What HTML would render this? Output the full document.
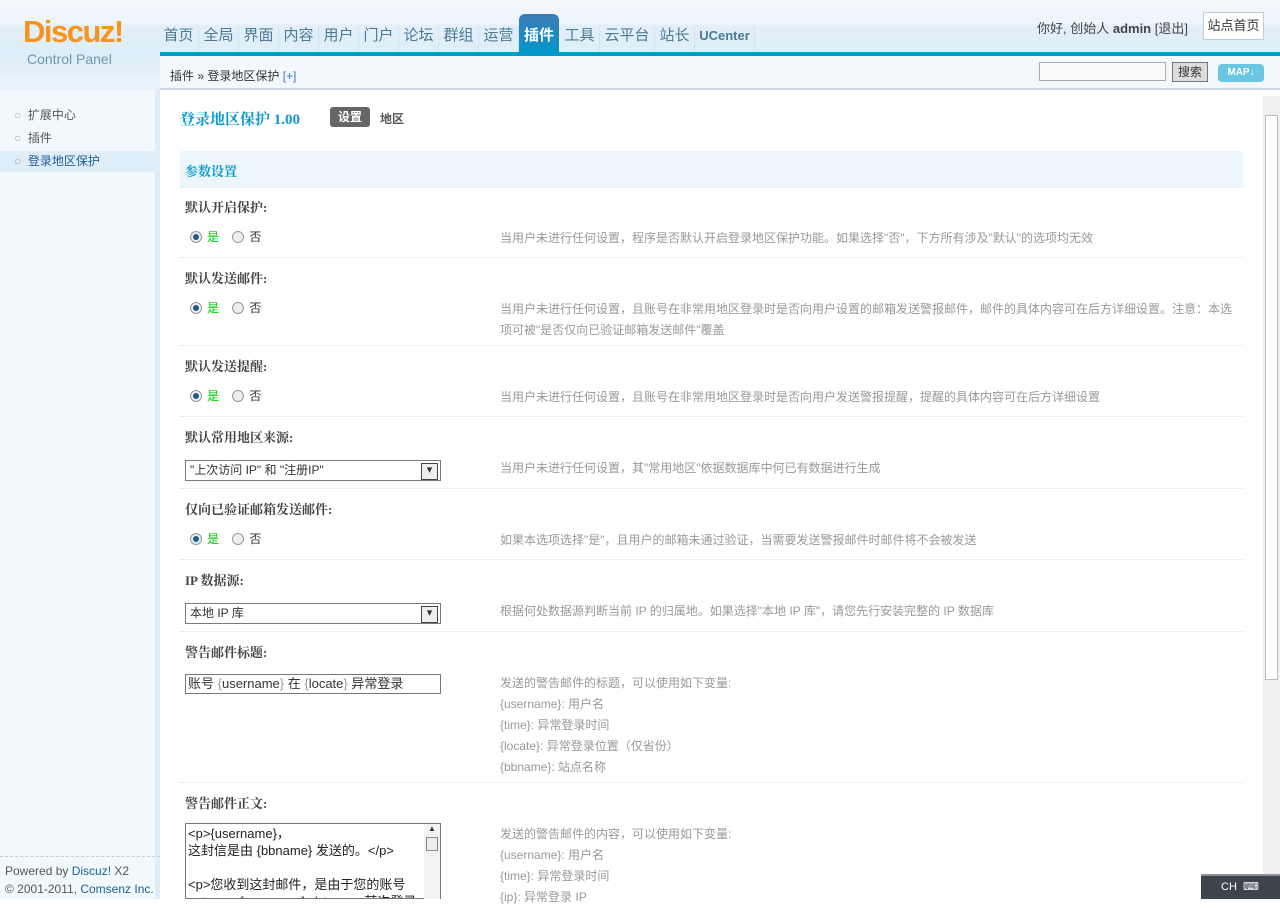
<!DOCTYPE html>
<html><head><meta charset="utf-8"><style>
*{margin:0;padding:0;box-sizing:border-box}
body{width:1280px;height:899px;overflow:hidden;background:#fff;font-family:"Liberation Sans","Noto Sans CJK SC",sans-serif;font-size:12px;color:#333;position:relative}
.a{position:absolute}
#top{left:0;top:0;width:1280px;height:56px;background:linear-gradient(#f3f8fc 0,#eef5fb 24px,#e3eff9 25px,#deedf8 56px)}
#bar{left:160px;top:52px;width:1120px;height:4px;background:#0099cc}
#crumb{left:160px;top:56px;width:1120px;height:34px;background:#f2f8fc;border-bottom:2px solid #c9dde9}
#side{left:0;top:90px;width:160px;height:809px;background:#f2f9fd;border-right:5px solid #deedf8}
.nav{top:26px;font-size:15px;color:#4a7a95;height:26px;line-height:20px;display:flex}
.nav span{display:inline-block;width:40px;text-align:center;border-right:1px solid #d3e4ef}
.lbl{font-weight:bold;color:#444;font-size:13px;left:185px;font-family:"Liberation Serif","Noto Serif CJK SC",serif}
.ds{left:500px;color:#999;font-size:12px;line-height:21px}
.sep{left:180px;width:1064px;border-top:1px dotted #cfe3f0;height:0}
.rad{left:190px;font-size:12px}
.r{display:inline-block;width:12px;height:12px;border-radius:50%;border:1px solid #999;background:#eee;vertical-align:-2px;margin-right:5px;position:relative}
.r.on:after{content:"";position:absolute;left:2px;top:2px;width:6px;height:6px;border-radius:50%;background:#1d5b8c}
.sel{left:185px;width:256px;height:21px;border:1px solid #7a7a7a;background:#fff;font-size:12px;line-height:19px;padding-left:4px}
.sel:after{content:"▾";position:absolute;right:2px;top:2px;width:15px;height:15px;border:1px solid #444;background:#eee;font-size:11px;line-height:13px;text-align:center}
.v{color:#999}
</style></head><body>
<div class="a" id="top"></div>
<div class="a" style="left:0;top:56px;width:160px;height:34px;background:linear-gradient(#deedf8,#eaf3fa)"></div>
<div class="a" style="left:23px;top:14px;font-size:31px;font-weight:bold;color:#f7941d;letter-spacing:-1.5px">Discuz!</div>
<div class="a" style="left:27px;top:51px;font-size:14px;color:#6a9ab3">Control Panel</div>
<div class="a nav" style="left:159px"><span>首页</span><span>全局</span><span>界面</span><span>内容</span><span>用户</span><span>门户</span><span>论坛</span><span>群组</span><span>运营</span></div>
<div class="a" style="left:519px;top:14px;width:40px;height:42px;background:linear-gradient(#3b7bb3,#0099cc);border-radius:6px 6px 0 0;color:#fff;font-size:15px;font-weight:bold;text-align:center;line-height:44px">插件</div>
<div class="a nav" style="left:560px"><span>工具</span><span style="width:55px">云平台</span><span style="width:40px">站长</span><span style="width:60px;font-size:13px;font-weight:bold">UCenter</span></div>
<div class="a" style="left:1037px;top:18px;color:#444;font-size:13px">你好, 创始人 <b>admin</b> [退出]</div>
<div class="a" style="left:1203px;top:12px;width:61px;height:28px;border:1px solid #b8cfd8;background:#fff;text-align:center;line-height:26px;font-size:13px">站点首页</div>
<div class="a" id="bar"></div>
<div class="a" id="crumb"></div>
<div class="a" style="left:170px;top:67px;font-size:12px;color:#333">插件 » 登录地区保护 <span style="color:#3a7cc2">[+]</span></div>
<div class="a" style="left:1039px;top:62px;width:127px;height:19px;border:1px solid #aaa;background:#fafafa"></div>
<div class="a" style="left:1172px;top:62px;width:36px;height:20px;border:1px solid #777;background:#ddd;text-align:center;line-height:18px">搜索</div>
<div class="a" style="left:1218px;top:64px;width:46px;height:18px;border-radius:4px;background:#6ac7e2;color:#fff;font-size:10px;font-weight:bold;text-align:center;line-height:18px">MAP↓</div>
<div class="a" id="side"></div>
<div class="a" style="left:0;top:151px;width:155px;height:21px;background:#deedf8"></div>
<div class="a" style="left:14px;top:104px;line-height:23px;font-size:12px;color:#555">
<div><span style="color:#aaa">○</span>&nbsp; 扩展中心</div><div><span style="color:#aaa">○</span>&nbsp; 插件</div><div style="color:#1b5e98"><span style="color:#aaa">○</span>&nbsp; 登录地区保护</div></div>
<div class="a" style="left:0;top:856px;width:160px;border-top:1px dashed #ccc"></div>
<div class="a" style="left:5px;top:862px;font-size:12px;color:#555;line-height:18px">Powered by <span style="color:#1b5e98">Discuz!</span> X2<br>© 2001-2011, <span style="color:#1b5e98">Comsenz Inc.</span></div>
<div class="a" style="left:1263px;top:96px;width:17px;height:803px;background:#f0f0f0"></div>
<div class="a" style="left:1265px;top:115px;width:13px;height:565px;background:#fff;border:1px solid #bbb"></div>

<div class="a" style="left:180px;top:108px;font-size:15px;font-weight:bold;color:#0a9ace;font-family:'Liberation Serif','Noto Serif CJK SC',serif">登录地区保护 1.00</div>
<div class="a" style="left:330px;top:107px;width:40px;height:20px;background:#666;border-radius:3px;color:#fff;font-weight:bold;text-align:center;line-height:20px">设置</div>
<div class="a" style="left:380px;top:110px;font-weight:bold;color:#555">地区</div>
<div class="a" style="left:180px;top:151px;width:1063px;height:36px;background:#eef6fd"></div>
<div class="a" style="left:185px;top:161px;font-size:13px;font-weight:bold;color:#0a9ace;font-family:'Liberation Serif','Noto Serif CJK SC',serif">参数设置</div>
<div class="a sep" style="top:187px"></div>

<div class="a lbl" style="top:197px">默认开启保护:</div>
<div class="a rad" style="top:228px"><i class="r on"></i><span style="color:#0c0">是</span> &nbsp;&nbsp; <i class="r"></i>否</div>
<div class="a ds" style="top:228px">当用户未进行任何设置，程序是否默认开启登录地区保护功能。如果选择"否"，下方所有涉及"默认"的选项均无效</div>
<div class="a sep" style="top:257px"></div>

<div class="a lbl" style="top:268px">默认发送邮件:</div>
<div class="a rad" style="top:299px"><i class="r on"></i><span style="color:#0c0">是</span> &nbsp;&nbsp; <i class="r"></i>否</div>
<div class="a ds" style="top:299px;width:740px">当用户未进行任何设置，且账号在非常用地区登录时是否向用户设置的邮箱发送警报邮件，邮件的具体内容可在后方详细设置。注意：本选项可被"是否仅向已验证邮箱发送邮件"覆盖</div>
<div class="a sep" style="top:345px"></div>

<div class="a lbl" style="top:356px">默认发送提醒:</div>
<div class="a rad" style="top:387px"><i class="r on"></i><span style="color:#0c0">是</span> &nbsp;&nbsp; <i class="r"></i>否</div>
<div class="a ds" style="top:387px">当用户未进行任何设置，且账号在非常用地区登录时是否向用户发送警报提醒，提醒的具体内容可在后方详细设置</div>
<div class="a sep" style="top:416px"></div>

<div class="a lbl" style="top:427px">默认常用地区来源:</div>
<div class="a sel" style="top:460px">"上次访问 IP" 和 "注册IP"</div>
<div class="a ds" style="top:458px">当用户未进行任何设置，其"常用地区"依据数据库中何已有数据进行生成</div>
<div class="a sep" style="top:488px"></div>

<div class="a lbl" style="top:499px">仅向已验证邮箱发送邮件:</div>
<div class="a rad" style="top:530px"><i class="r on"></i><span style="color:#0c0">是</span> &nbsp;&nbsp; <i class="r"></i>否</div>
<div class="a ds" style="top:530px">如果本选项选择"是"，且用户的邮箱未通过验证，当需要发送警报邮件时邮件将不会被发送</div>
<div class="a sep" style="top:559px"></div>

<div class="a lbl" style="top:570px">IP 数据源:</div>
<div class="a sel" style="top:603px">本地 IP 库</div>
<div class="a ds" style="top:601px">根据何处数据源判断当前 IP 的归属地。如果选择"本地 IP 库"，请您先行安装完整的 IP 数据库</div>
<div class="a sep" style="top:631px"></div>

<div class="a lbl" style="top:642px">警告邮件标题:</div>
<div class="a" style="left:185px;top:674px;width:256px;height:20px;border:1px solid #777;font-size:13px;line-height:18px;padding-left:2px">账号 <span class="v">{</span>username<span class="v">}</span> 在 <span class="v">{</span>locate<span class="v">}</span> 异常登录</div>
<div class="a ds" style="top:673px">发送的警告邮件的标题，可以使用如下变量:<br>{username}: 用户名<br>{time}: 异常登录时间<br>{locate}: 异常登录位置（仅省份）<br>{bbname}: 站点名称</div>
<div class="a sep" style="top:782px"></div>

<div class="a lbl" style="top:793px">警告邮件正文:</div>
<div class="a" style="left:185px;top:823px;width:256px;height:76px;border:1px solid #777;font-size:13px;line-height:17px;padding:1px 18px 0 2px;overflow:hidden;color:#222">&lt;p&gt;{username}，<br>这封信是由 {bbname} 发送的。&lt;/p&gt;<br><br>&lt;p&gt;您收到这封邮件，是由于您的账号 &lt;strong&gt;{username}&lt;/strong&gt; 某次登录</div>
<div class="a" style="left:424px;top:824px;width:16px;height:75px;background:#f3f3f3;font-size:8px;text-align:center;color:#333">▲<div style="margin:4px 2px;border:1px solid #888;height:14px;background:#eee"></div></div>
<div class="a ds" style="top:824px">发送的警告邮件的内容，可以使用如下变量:<br>{username}: 用户名<br>{time}: 异常登录时间<br>{ip}: 异常登录 IP</div>
<div class="a" style="left:1201px;top:874px;width:79px;height:25px;background:#3d444c;border-top:2px solid #8a9096;color:#fff;font-size:11px;line-height:23px;padding-left:20px">CH &nbsp;⌨</div>
</body></html>
